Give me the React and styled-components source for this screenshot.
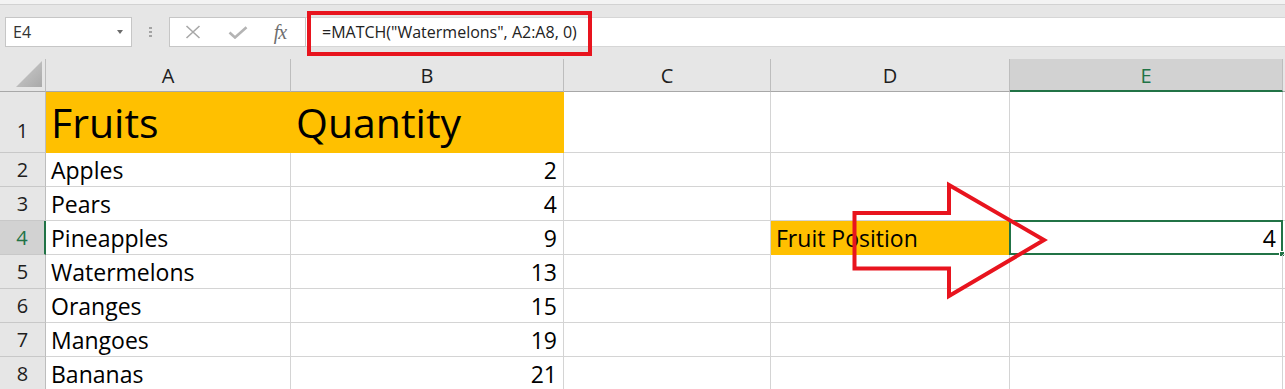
import React from 'react';
import styled, { createGlobalStyle, css } from 'styled-components';

const GlobalStyle = createGlobalStyle`
  html, body { margin: 0; padding: 0; background: #fff; }
  body { font-family: "Open Sans", "Noto Sans", sans-serif; overflow: hidden; }
  *, *::before, *::after { box-sizing: border-box; }
`;

const GREEN = '#217346';
const RED = '#e8141e';
const YELLOW = '#ffc000';

const Window = styled.div`
  position: relative;
  width: 1285px;
  height: 389px;
  overflow: hidden;
  background: #e6e6e6;
`;

const RibbonEdge = styled.div`
  height: 5px;
  background: #f3f3f3;
  border-bottom: 1px solid #d2d2d2;
`;

const FormulaBar = styled.div`
  display: flex;
  align-items: flex-start;
  height: 54px;
  padding: 12px 0 0 5px;
`;

const NameBox = styled.div`
  display: flex;
  align-items: center;
  justify-content: space-between;
  width: 127px;
  height: 30px;
  background: #fff;
  border: 1px solid #c6c6c6;
  padding: 0 8px 0 7px;
  font-size: 16px;
  color: #333;
`;

const Caret = styled.span`
  width: 0;
  height: 0;
  border-left: 3.5px solid transparent;
  border-right: 3.5px solid transparent;
  border-top: 4px solid #6b6b6b;
`;

const Grip = styled.div`
  width: 37px;
  height: 30px;
  display: flex;
  flex-direction: column;
  align-items: center;
  justify-content: center;
  gap: 2px;
`;

const GripDot = styled.span`
  width: 3px;
  height: 2px;
  background: #a3a3a3;
`;

const IconBox = styled.div`
  display: grid;
  grid-template-columns: 46px 44px 40px;
  align-items: center;
  justify-items: center;
  width: 137px;
  height: 30px;
  background: #fff;
  border: 1px solid #c6c6c6;
`;

const FxLabel = styled.span`
  font-family: "Liberation Serif", "DejaVu Serif", serif;
  font-style: italic;
  font-size: 20px;
  color: #6f6f6f;
  letter-spacing: -1px;
  line-height: 1;
`;

const FormulaInput = styled.div`
  flex: 1;
  height: 30px;
  background: #fff;
  border-top: 1px solid #d6d6d6;
  border-bottom: 1px solid #d6d6d6;
  padding-left: 16px;
  font-size: 16px;
  line-height: 28px;
  color: #222;
  white-space: pre;
`;

const Highlight = styled.div`
  position: absolute;
  left: 307px;
  top: 11px;
  width: 285px;
  height: 45px;
  border: 4px solid ${RED};
  pointer-events: none;
`;

const Sheet = styled.div`
  display: grid;
  grid-template-columns: 46px 245px 273px 207px 239px 273px 1fr;
  grid-template-rows: 33px 61px repeat(7, 34px);
  background: #fff;
`;

const Corner = styled.div`
  display: flex;
  justify-content: flex-end;
  align-items: flex-end;
  padding: 0 3px 4px 0;
  background: #e6e6e6;
  border-right: 1px solid #bdbdbd;
  border-bottom: 1px solid #a8a8a8;
`;

const SelectAll = styled.div`
  width: 26px;
  height: 26px;
  background: linear-gradient(135deg, #cfcfcf, #a9a9a9);
  clip-path: polygon(100% 0, 100% 100%, 0 100%);
`;

const ColHeader = styled.div`
  display: flex;
  align-items: center;
  justify-content: center;
  padding-top: 1px;
  background: #e6e6e6;
  border-right: 1px solid #bdbdbd;
  border-bottom: 1px solid #a8a8a8;
  font-size: 20px;
  color: #1e1e1e;
  ${(p) =>
    p.$active &&
    css`
      background: #d2d2d2;
      color: ${GREEN};
      border-bottom: 2px solid ${GREEN};
    `}
`;

const RowHeader = styled.div`
  display: flex;
  align-items: flex-end;
  justify-content: center;
  background: #e6e6e6;
  border-right: 1px solid #bdbdbd;
  border-bottom: 1px solid #c8c8c8;
  font-size: 20px;
  line-height: 1;
  color: #1e1e1e;
  padding-bottom: ${(p) => p.$pb}px;
  ${(p) =>
    p.$active &&
    css`
      background: #d2d2d2;
      color: ${GREEN};
      border-right: 2px solid ${GREEN};
    `}
`;

const Cell = styled.div`
  position: relative;
  display: flex;
  align-items: flex-end;
  justify-content: ${(p) => (p.$num ? 'flex-end' : 'flex-start')};
  padding: 0 ${(p) => (p.$num ? 6 : 5)}px ${(p) => (p.$big ? 9 : 4)}px;
  border-right: 1px solid #d4d4d4;
  border-bottom: 1px solid #d4d4d4;
  font-size: ${(p) => (p.$big ? 41 : 23)}px;
  line-height: 1;
  color: #000;
  white-space: nowrap;
  ${(p) =>
    p.$fill &&
    css`
      background: ${p.$fill};
      border-color: ${p.$fill};
    `}
  ${(p) =>
    p.$selected &&
    css`
      &::before {
        content: '';
        position: absolute;
        left: -1px;
        top: -1px;
        right: -1px;
        bottom: -1px;
        border: 2px solid ${GREEN};
      }
      &::after {
        content: '';
        position: absolute;
        right: -3px;
        bottom: -3px;
        width: 6px;
        height: 6px;
        background: ${GREEN};
        border: 1px solid #fff;
      }
    `}
`;

const Overlay = styled.svg`
  position: absolute;
  left: 0;
  top: 0;
  pointer-events: none;
`;

const columns = ['A', 'B', 'C', 'D', 'E', ''];

const data = [
  ['Apples', 2],
  ['Pears', 4],
  ['Pineapples', 9],
  ['Watermelons', 13],
  ['Oranges', 15],
  ['Mangoes', 19],
  ['Bananas', 21],
];

function CloseIcon() {
  return (
    <svg width="16" height="14" viewBox="0 0 16 14">
      <path d="M1.5 1 L14.5 13 M14.5 1 L1.5 13" stroke="#a8a8a8" strokeWidth="1.6" fill="none" />
    </svg>
  );
}

function CheckIcon() {
  return (
    <svg width="20" height="13" viewBox="0 0 20 13">
      <path d="M1.5 6.5 L7 11.5 L18.5 1.2" stroke="#b4b4b4" strokeWidth="2.6" fill="none" />
    </svg>
  );
}

export default function App() {
  return (
    <Window>
      <GlobalStyle />
      <RibbonEdge />
      <FormulaBar>
        <NameBox>
          <span>E4</span>
          <Caret />
        </NameBox>
        <Grip>
          <GripDot />
          <GripDot />
          <GripDot />
        </Grip>
        <IconBox>
          <CloseIcon />
          <CheckIcon />
          <FxLabel>fx</FxLabel>
        </IconBox>
        <FormulaInput>=MATCH("Watermelons", A2:A8, 0)</FormulaInput>
      </FormulaBar>
      <Highlight />
      <Sheet>
        <Corner>
          <SelectAll />
        </Corner>
        {columns.map((c, i) => (
          <ColHeader key={i} $active={c === 'E'}>
            {c}
          </ColHeader>
        ))}

        <RowHeader $pb={11}>1</RowHeader>
        <Cell $big $fill={YELLOW}>Fruits</Cell>
        <Cell $big $fill={YELLOW}>Quantity</Cell>
        <Cell />
        <Cell />
        <Cell />
        <Cell />

        {data.map(([name, qty], i) => {
          const row = i + 2;
          const isRow4 = row === 4;
          return (
            <React.Fragment key={row}>
              <RowHeader $pb={6} $active={isRow4}>
                {row}
              </RowHeader>
              <Cell>{name}</Cell>
              <Cell $num>{qty}</Cell>
              <Cell />
              {isRow4 ? <Cell $fill={YELLOW}>Fruit Position</Cell> : <Cell />}
              {isRow4 ? (
                <Cell $num $selected>
                  4
                </Cell>
              ) : (
                <Cell />
              )}
              <Cell />
            </React.Fragment>
          );
        })}
      </Sheet>
      <Overlay width="1285" height="389" viewBox="0 0 1285 389">
        <polygon
          points="854.5,213 949,213 949,185 1044,240 949,296 949,268.5 854.5,268.5"
          fill="none"
          stroke={RED}
          strokeWidth="4"
          strokeLinejoin="miter"
        />
      </Overlay>
    </Window>
  );
}
